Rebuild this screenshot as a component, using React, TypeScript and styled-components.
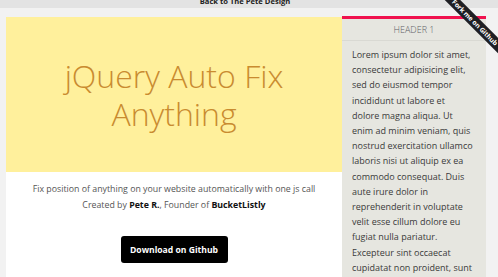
import React from "react";
import styled, { createGlobalStyle } from "styled-components";

const Global = createGlobalStyle`
  html, body { margin: 0; padding: 0; }
  body {
    background: #f2f2f2;
    font-family: "Open Sans", "Noto Sans", sans-serif;
    overflow: hidden;
  }
`;

const TopBar = styled.div`
  height: 8px;
  background: #e3e3e3;
  overflow: hidden;
  display: flex;
  justify-content: center;
  align-items: flex-end;
  padding-right: 8px;
`;

const TopLink = styled.a`
  font-size: 7.6px;
  font-weight: 700;
  color: #222;
  line-height: 8px;
  margin-bottom: 3px;
  text-decoration: none;
`;

const Page = styled.div`
  display: flex;
  width: 480px;
  margin: 8px 0 0 6px;
`;

const Main = styled.main`
  width: 336px;
  flex: none;
  background: #fff;
  margin-top: 1px;
  display: flex;
  flex-direction: column;
`;

const Hero = styled.div`
  height: 155px;
  background: #fff09c;
  display: flex;
  align-items: center;
  justify-content: center;
`;

const Title = styled.h1`
  margin: 0;
  width: 230px;
  text-align: center;
  font-weight: 300;
  font-size: 32px;
  line-height: 38px;
  color: #c98b30;
`;

const Intro = styled.div`
  padding-top: 9px;
  text-align: center;
  font-size: 8.8px;
  line-height: 16px;
  color: #555;

  b { color: #111; font-weight: 700; }
`;

const Button = styled.a`
  display: inline-flex;
  align-items: center;
  justify-content: center;
  width: 107px;
  height: 27px;
  margin-top: 23px;
  border-radius: 3px;
  background: #000;
  color: #fff;
  font-weight: 700;
  font-size: 8.6px;
  text-decoration: none;
`;

const Sidebar = styled.aside`
  width: 144px;
  flex: none;
  box-sizing: border-box;
  background: #e6e6e0;
  border-top: 3px solid #f0124f;
  height: 270px;
`;

const SideHeader = styled.div`
  height: 21px;
  border-bottom: 1px solid #d9d9d3;
  display: flex;
  align-items: center;
  justify-content: center;
  font-size: 9px;
  font-weight: 300;
  color: #5e5e66;
`;

const SideText = styled.p`
  margin: 0;
  padding: 6px 12px 0 10px;
  font-size: 9px;
  line-height: 15.2px;
  color: #3a3a3a;
`;

const RibbonClip = styled.div`
  position: fixed;
  top: 0;
  right: 0;
  width: 64px;
  height: 64px;
  overflow: hidden;
`;

const Ribbon = styled.a`
  position: absolute;
  width: 110px;
  height: 11px;
  left: calc(64px - 22.6px - 55px);
  top: calc(22.6px - 5.5px);
  transform: rotate(45deg);
  background: #1f1f24;
  color: #fff;
  font-size: 6.6px;
  font-weight: 700;
  line-height: 11px;
  text-align: center;
  text-decoration: none;
`;

export default function App() {
  return (
    <>
      <Global />
      <TopBar>
        <TopLink href="#">Back to The Pete Design</TopLink>
      </TopBar>
      <Page>
        <Main>
          <Hero>
            <Title>jQuery Auto Fix Anything</Title>
          </Hero>
          <Intro>
            Fix position of anything on your website automatically with one js call
            <br />
            Created by <b>Pete R.</b>, Founder of <b>BucketListly</b>
            <br />
            <Button href="#">Download on Github</Button>
          </Intro>
        </Main>
        <Sidebar>
          <SideHeader>HEADER 1</SideHeader>
          <SideText>
            Lorem ipsum dolor sit amet, consectetur adipisicing elit, sed do
            eiusmod tempor incididunt ut labore et dolore magna aliqua. Ut enim
            ad minim veniam, quis nostrud exercitation ullamco laboris nisi ut
            aliquip ex ea commodo consequat. Duis aute irure dolor in
            reprehenderit in voluptate velit esse cillum dolore eu fugiat nulla
            pariatur. Excepteur sint occaecat cupidatat non proident, sunt in
            culpa qui officia deserunt mollit anim id est laborum.
          </SideText>
        </Sidebar>
      </Page>
      <RibbonClip>
        <Ribbon href="#">Fork me on Github</Ribbon>
      </RibbonClip>
    </>
  );
}
